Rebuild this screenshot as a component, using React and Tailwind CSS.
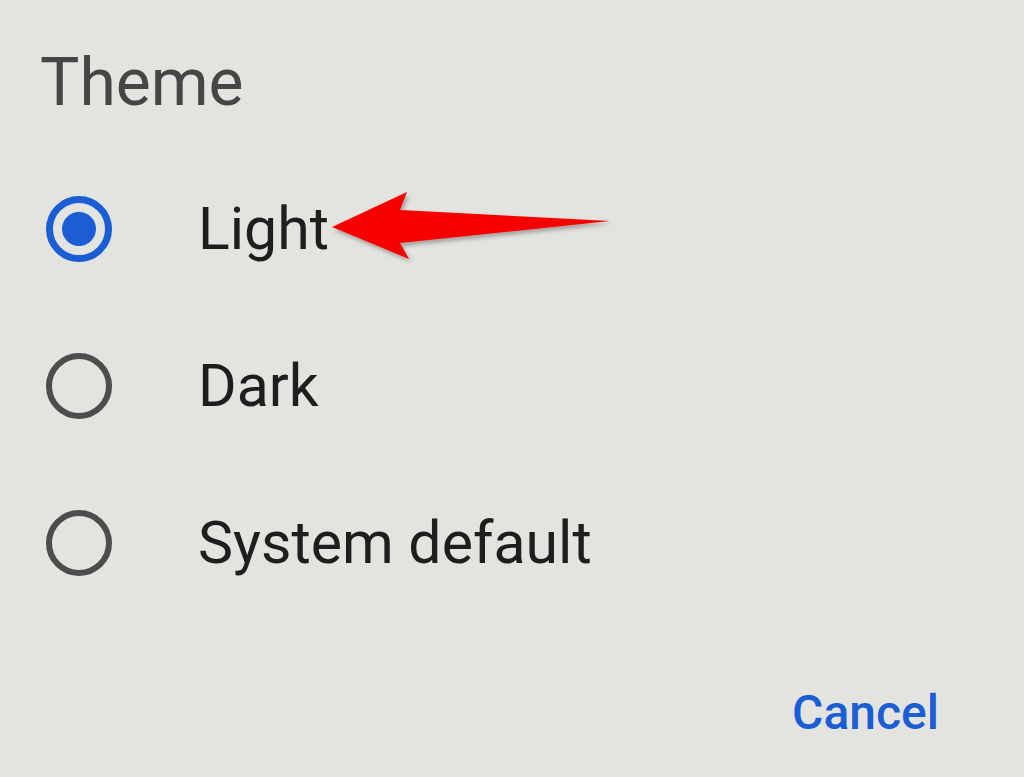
import React from "react";

function Radio({ checked }) {
  if (checked) {
    return (
      <div className="w-[66px] h-[66px] rounded-full border-[7px] border-[#1a5dd4] flex items-center justify-center">
        <div className="w-[34px] h-[34px] rounded-full bg-[#1a5dd4]" />
      </div>
    );
  }
  return <div className="w-[66px] h-[66px] rounded-full border-[6px] border-[#4d4d4d]" />;
}

const options = [
  { label: "Light", checked: true },
  { label: "Dark", checked: false },
  { label: "System default", checked: false },
];

export default function App() {
  return (
    <div
      className="relative w-[1024px] h-[777px] bg-[#e3e4e0] overflow-hidden flex flex-col"
      style={{ fontFamily: "Roboto, 'Open Sans', sans-serif" }}
    >
      <div className="pl-[40px] pt-[43px] text-[66px] leading-[80px] text-[#464646]">Theme</div>
      <div className="flex flex-col mt-[27px]">
        {options.map((o) => (
          <div key={o.label} className="h-[157px] flex items-center">
            <div className="ml-[46px]">
              <Radio checked={o.checked} />
            </div>
            <div className="ml-[86px] text-[59px] leading-[70px] text-[#1e1e1e]">{o.label}</div>
          </div>
        ))}
      </div>
      <div className="flex justify-end pr-[85px] mt-[62px]">
        <div className="text-[48px] leading-[60px] font-medium text-[#1a5dd4]">Cancel</div>
      </div>
      <svg className="absolute left-0 top-0" width="1024" height="777" viewBox="0 0 1024 777">
        <defs>
          <filter id="sh" x="-10%" y="-30%" width="130%" height="160%">
            <feDropShadow dx="2" dy="3" stdDeviation="2" floodColor="#000" floodOpacity="0.3" />
          </filter>
        </defs>
        <path
          d="M332 227 L407 192 L400 210 L610 221 L400 243 L409 259 Z"
          fill="#f80000"
          filter="url(#sh)"
        />
      </svg>
    </div>
  );
}
